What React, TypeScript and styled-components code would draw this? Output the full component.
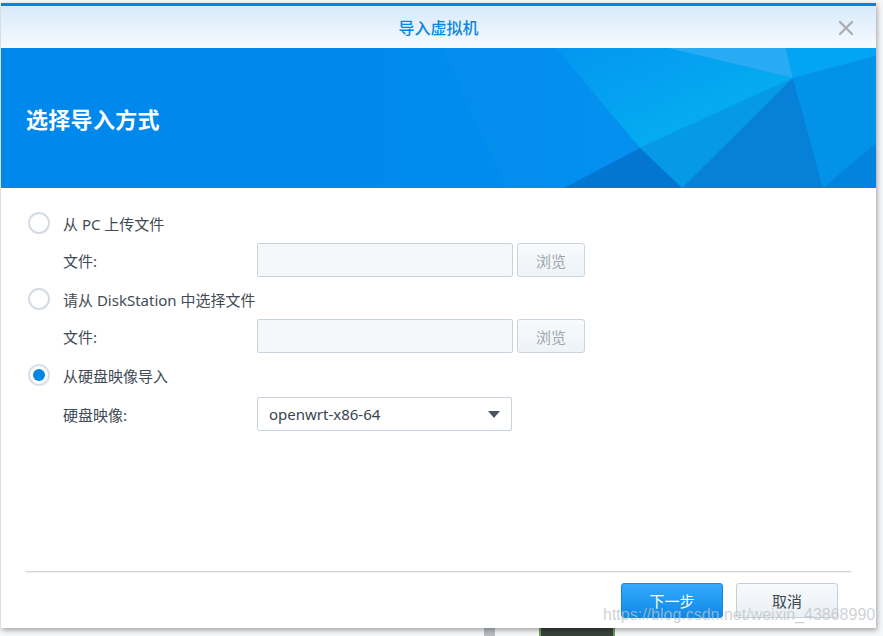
import styled, { createGlobalStyle } from 'styled-components';
import { useState } from 'react';

const GlobalStyle = createGlobalStyle`
  html, body {
    margin: 0;
    padding: 0;
    width: 883px;
    height: 636px;
    overflow: hidden;
    background: #eef1f4;
    font-family: "Noto Sans", "Noto Sans CJK SC", sans-serif;
  }
`;

const Desktop = styled.div`
  position: relative;
  width: 883px;
  height: 636px;
  overflow: hidden;
  background: #f4f6f8;
`;

const BackdropRow = styled.div`
  display: flex;
  align-items: flex-start;
  padding: 626px 0 0 484px;
  gap: 44px;
`;

const BackdropBar = styled.div`
  width: 11px;
  height: 20px;
  background: #b8bcc2;
`;

const BackdropTile = styled.div`
  width: 72px;
  height: 20px;
  background: #3a403c;
  border: 2px solid #6aa05a;
  border-top: none;
`;

const BackdropHeading = styled.div`
  margin-top: 4px;
  font-family: "Noto Sans CJK SC", sans-serif;
  font-size: 26px;
  font-weight: 700;
  color: #2a3038;
`;

const Dialog = styled.div`
  position: absolute;
  left: 1px;
  top: 3px;
  width: 875px;
  height: 625px;
  display: flex;
  flex-direction: column;
  background: #fff;
  border-top: 3px solid #0085e6;
  box-sizing: border-box;
  box-shadow: 1px 2px 5px rgba(0, 0, 0, 0.35);
`;

const TitleBar = styled.div`
  position: relative;
  height: 42px;
  display: flex;
  align-items: center;
  justify-content: center;
  background: linear-gradient(#d8eafb, #f6faff);
`;

const Title = styled.div`
  font-family: "Noto Sans CJK SC", sans-serif;
  font-size: 16px;
  font-weight: 500;
  color: #0a86df;
`;

const CloseButton = styled.button`
  position: absolute;
  right: 21px;
  top: 13px;
  width: 18px;
  height: 18px;
  padding: 0;
  border: none;
  background: none;
  cursor: pointer;
  display: flex;
  align-items: center;
  justify-content: center;
`;

const Banner = styled.div`
  position: relative;
  height: 140px;
  display: flex;
  align-items: center;
  padding-left: 25px;
  background: linear-gradient(90deg, #0088ec 0%, #0089ed 40%, #008ff0 70%, #0094f2 100%);
  overflow: hidden;
`;

const BannerArt = styled.svg`
  position: absolute;
  left: 0;
  top: 0;
`;

const BannerTitle = styled.h1`
  position: relative;
  margin: 0 0 1px;
  font-family: "Noto Sans CJK SC", sans-serif;
  font-size: 22px;
  font-weight: 700;
  color: #fff;
  letter-spacing: 0.3px;
`;

const Body = styled.div`
  flex: 1;
  display: flex;
  flex-direction: column;
  padding: 23px 0 0 27px;
`;

const OptionRow = styled.label`
  display: flex;
  align-items: center;
  gap: 13px;
  height: 24px;
  cursor: pointer;
  margin-bottom: 8px;
`;

const RadioCircle = styled.span<{ $checked?: boolean }>`
  width: 22px;
  height: 22px;
  box-sizing: border-box;
  border-radius: 50%;
  border: 2px solid ${({ $checked }) => ($checked ? '#d7e0e8' : '#d4dbe3')};
  background: #fff;
  display: flex;
  align-items: center;
  justify-content: center;

  &::after {
    content: '';
    width: 12px;
    height: 12px;
    border-radius: 50%;
    background: ${({ $checked }) => ($checked ? '#0086e6' : 'transparent')};
  }
`;

const OptionText = styled.span`
  font-size: 15px;
  color: #414b55;
`;

const FieldRow = styled.div<{ $offset?: number }>`
  display: flex;
  align-items: center;
  height: 34px;
  padding-left: 35px;
  margin-top: ${({ $offset }) => $offset ?? 0}px;
  margin-bottom: 10px;
`;

const FieldLabel = styled.span`
  width: 194px;
  font-size: 15px;
  color: #414b55;
`;

const TextBox = styled.input`
  width: 256px;
  height: 34px;
  box-sizing: border-box;
  border: 1px solid #c8d2dc;
  border-radius: 2px;
  background: #f5f7fa;
  outline: none;
`;

const BrowseButton = styled.button`
  width: 68px;
  height: 34px;
  margin-left: 4px;
  box-sizing: border-box;
  border: 1px solid #cad4de;
  border-radius: 3px;
  background: linear-gradient(#f8fafc, #eef3f8);
  font-family: "Noto Sans CJK SC", sans-serif;
  font-size: 15px;
  color: #9ea7b0;
  cursor: default;
`;

const Select = styled.div`
  width: 255px;
  height: 34px;
  box-sizing: border-box;
  display: flex;
  align-items: center;
  justify-content: space-between;
  padding: 0 11px;
  border: 1px solid #c8d2dc;
  border-radius: 2px;
  background: #fff;
  font-size: 15px;
  color: #3a4450;
`;

const Caret = styled.span`
  width: 0;
  height: 0;
  border-left: 6px solid transparent;
  border-right: 6px solid transparent;
  border-top: 7px solid #4a5560;
`;

const Footer = styled.div`
  display: flex;
  flex-direction: column;
  padding: 0 25px 10px;
`;

const Divider = styled.div`
  height: 0;
  border-top: 1px solid #d2d6da;
  box-shadow: 0 1px 1px rgba(0, 0, 0, 0.08);
  margin-bottom: 11px;
`;

const ButtonBar = styled.div`
  display: flex;
  justify-content: flex-end;
  gap: 13px;
  padding-right: 13px;
`;

const DialogButton = styled.button<{ $primary?: boolean }>`
  width: 102px;
  height: 35px;
  box-sizing: border-box;
  border-radius: 3px;
  border: 1px solid ${({ $primary }) => ($primary ? '#1585e0' : '#c4cfda')};
  background: ${({ $primary }) =>
    $primary ? 'linear-gradient(#35aaff, #0d89e6)' : 'linear-gradient(#f7f9fc, #ebf0f6)'};
  color: ${({ $primary }) => ($primary ? '#fff' : '#3c4650')};
  font-family: "Noto Sans CJK SC", sans-serif;
  font-size: 15px;
  cursor: pointer;
`;

const Watermark = styled.div`
  position: absolute;
  left: 603px;
  top: 606px;
  font-family: "Liberation Sans", Arial, sans-serif;
  font-size: 16px;
  color: rgba(190, 194, 200, 0.75);
  pointer-events: none;
  white-space: nowrap;
`;

type Mode = 'pc' | 'ds' | 'image';

const BannerShapes = () => (
  <BannerArt width="875" height="140" viewBox="0 0 875 140">
    <defs>
      <linearGradient id="glow" x1="0" y1="0" x2="1" y2="1">
        <stop offset="0" stopColor="#0396f1" />
        <stop offset="1" stopColor="#06b6f0" />
      </linearGradient>
    </defs>
    <polygon points="440,0 555,0 639,100 563,140 505,140" fill="#0a93ee" opacity="0.35" />
    <polygon points="555,0 667,0 792,30 639,100" fill="url(#glow)" />
    <polygon points="667,0 785,0 792,30" fill="#27acf3" />
    <polygon points="785,0 875,0 875,8 792,30" fill="#03a4f4" />
    <polygon points="639,100 792,30 681,140" fill="#0599e6" />
    <polygon points="563,140 639,100 681,140" fill="#0376d2" />
    <polygon points="681,140 792,30 822,140" fill="#0780d8" />
    <polygon points="792,30 875,8 875,95 822,140" fill="#0292e8" />
    <polygon points="822,140 875,95 875,140" fill="#0284dc" />
  </BannerArt>
);

const App = () => {
  const [mode, setMode] = useState<Mode>('image');

  return (
    <>
      <GlobalStyle />
      <Desktop>
        <BackdropRow>
          <BackdropBar />
          <BackdropTile />
          <BackdropHeading>主机映像</BackdropHeading>
        </BackdropRow>

        <Dialog>
          <TitleBar>
            <Title>导入虚拟机</Title>
            <CloseButton aria-label="关闭">
              <svg width="16" height="16" viewBox="0 0 16 16">
                <path d="M2 2 L14 14 M14 2 L2 14" stroke="#a9aeb4" strokeWidth="2.4" strokeLinecap="round" />
              </svg>
            </CloseButton>
          </TitleBar>

          <Banner>
            <BannerShapes />
            <BannerTitle>选择导入方式</BannerTitle>
          </Banner>

          <Body>
            <OptionRow onClick={() => setMode('pc')}>
              <RadioCircle $checked={mode === 'pc'} />
              <OptionText>从 PC 上传文件</OptionText>
            </OptionRow>
            <FieldRow>
              <FieldLabel>文件:</FieldLabel>
              <TextBox disabled={mode !== 'pc'} />
              <BrowseButton>浏览</BrowseButton>
            </FieldRow>

            <OptionRow onClick={() => setMode('ds')}>
              <RadioCircle $checked={mode === 'ds'} />
              <OptionText>请从 DiskStation 中选择文件</OptionText>
            </OptionRow>
            <FieldRow>
              <FieldLabel>文件:</FieldLabel>
              <TextBox disabled={mode !== 'ds'} />
              <BrowseButton>浏览</BrowseButton>
            </FieldRow>

            <OptionRow onClick={() => setMode('image')}>
              <RadioCircle $checked={mode === 'image'} />
              <OptionText>从硬盘映像导入</OptionText>
            </OptionRow>
            <FieldRow $offset={2}>
              <FieldLabel>硬盘映像:</FieldLabel>
              <Select>
                openwrt-x86-64
                <Caret />
              </Select>
            </FieldRow>
          </Body>

          <Footer>
            <Divider />
            <ButtonBar>
              <DialogButton $primary>下一步</DialogButton>
              <DialogButton>取消</DialogButton>
            </ButtonBar>
          </Footer>
        </Dialog>

        <Watermark>https://blog.csdn.net/weixin_43868990</Watermark>
      </Desktop>
    </>
  );
};

export default App;
